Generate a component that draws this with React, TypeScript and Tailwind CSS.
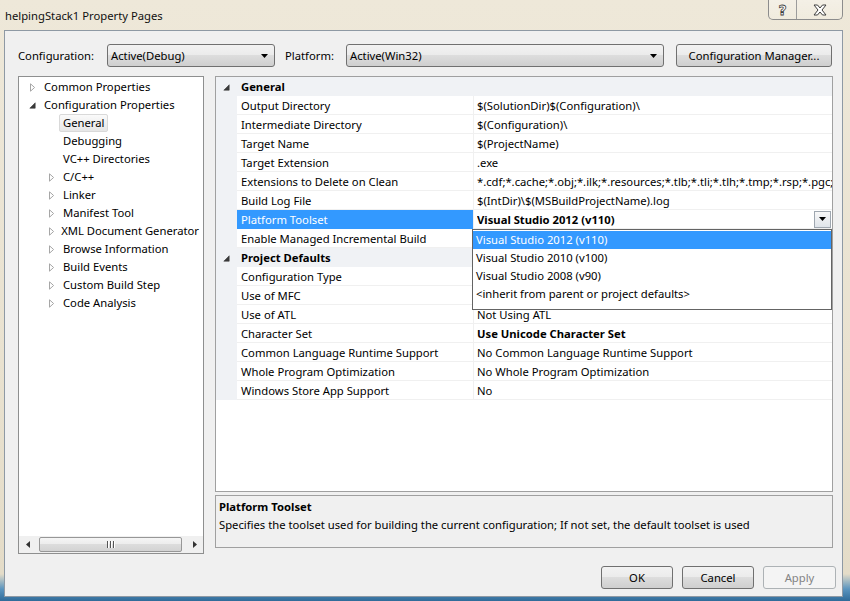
import React from "react";

const Collapsed = () => (
  <svg width="7" height="9" viewBox="0 0 7 9">
    <path d="M1.5 0.8 L5.6 4.5 L1.5 8.2 Z" fill="#ffffff" stroke="#a6a6a6" strokeWidth="1" />
  </svg>
);
const Expanded = () => (
  <svg width="7" height="7" viewBox="0 0 7 7">
    <path d="M6.2 0.8 L6.2 6.2 L0.8 6.2 Z" fill="#3a3a3a" stroke="#3a3a3a" strokeWidth="0.6" />
  </svg>
);
const DownArrow = ({ w = 7 }: { w?: number }) => (
  <svg width={w} height="4" viewBox="0 0 7 4">
    <path d="M0 0 L7 0 L3.5 4 Z" fill="#000" />
  </svg>
);

type TI = { level: 0 | 1; label: string; exp?: "c" | "e"; sel?: boolean };
const tree: TI[] = [
  { level: 0, label: "Common Properties", exp: "c" },
  { level: 0, label: "Configuration Properties", exp: "e" },
  { level: 1, label: "General", sel: true },
  { level: 1, label: "Debugging" },
  { level: 1, label: "VC++ Directories" },
  { level: 1, label: "C/C++", exp: "c" },
  { level: 1, label: "Linker", exp: "c" },
  { level: 1, label: "Manifest Tool", exp: "c" },
  { level: 1, label: "XML Document Generator", exp: "c" },
  { level: 1, label: "Browse Information", exp: "c" },
  { level: 1, label: "Build Events", exp: "c" },
  { level: 1, label: "Custom Build Step", exp: "c" },
  { level: 1, label: "Code Analysis", exp: "c" },
];

type Row =
  | { cat: string }
  | { name: string; value: string; bold?: boolean; sel?: boolean; drop?: boolean };
const rows: Row[] = [
  { cat: "General" },
  { name: "Output Directory", value: "$(SolutionDir)$(Configuration)\\" },
  { name: "Intermediate Directory", value: "$(Configuration)\\" },
  { name: "Target Name", value: "$(ProjectName)" },
  { name: "Target Extension", value: ".exe" },
  {
    name: "Extensions to Delete on Clean",
    value:
      "*.cdf;*.cache;*.obj;*.ilk;*.resources;*.tlb;*.tli;*.tlh;*.tmp;*.rsp;*.pgc;*.pgd;*.meta;*.tlog;*.manifest;*.res",
  },
  { name: "Build Log File", value: "$(IntDir)\\$(MSBuildProjectName).log" },
  { name: "Platform Toolset", value: "Visual Studio 2012 (v110)", bold: true, sel: true, drop: true },
  { name: "Enable Managed Incremental Build", value: "" },
  { cat: "Project Defaults" },
  { name: "Configuration Type", value: "" },
  { name: "Use of MFC", value: "" },
  { name: "Use of ATL", value: "Not Using ATL" },
  { name: "Character Set", value: "Use Unicode Character Set", bold: true },
  { name: "Common Language Runtime Support", value: "No Common Language Runtime Support" },
  { name: "Whole Program Optimization", value: "No Whole Program Optimization" },
  { name: "Windows Store App Support", value: "No" },
];

const options = [
  "Visual Studio 2012 (v110)",
  "Visual Studio 2010 (v100)",
  "Visual Studio 2008 (v90)",
  "<inherit from parent or project defaults>",
];

function Combo({ text, w }: { text: string; w: string }) {
  return (
    <div
      className={`${w} h-[23px] rounded-[3px] border border-[#707070] bg-[linear-gradient(to_bottom,#f2f2f2_0%,#ebebeb_50%,#dddddd_50%,#cfcfcf_100%)] flex items-center pl-[3px] pr-[6px]`}
    >
      <span className="flex-1 whitespace-nowrap">{text}</span>
      <DownArrow />
    </div>
  );
}

function Button({ text, w, disabled }: { text: string; w: string; disabled?: boolean }) {
  return (
    <div
      className={
        disabled
          ? `${w} h-[23px] rounded-[3px] border border-[#adb2b5] bg-[#f4f4f4] text-[#838383] flex items-center justify-center`
          : `${w} h-[23px] rounded-[3px] border border-[#707070] bg-[linear-gradient(to_bottom,#f2f2f2_0%,#ebebeb_50%,#dddddd_50%,#cfcfcf_100%)] flex items-center justify-center`
      }
    >
      {text}
    </div>
  );
}

export default function App() {
  return (
    <div className="w-[850px] h-[601px] overflow-hidden flex flex-col font-['Noto_Sans',sans-serif] text-[11.25px] leading-[18px] text-black bg-[linear-gradient(to_bottom,#eee8d9_0%,#e9e2d0_60%,#e4dcc8_95.5%,#5b95bf_98%,#2f6b99_100%)]">
      {/* Title bar */}
      <div className="h-[30px] shrink-0 flex items-start">
        <div className="pl-[5px] pt-[7px] text-[#101010]">helpingStack1 Property Pages</div>
        <div className="ml-auto mr-[7px] flex h-[20px] border border-t-0 border-[#8c8c8c] rounded-b-[5px] bg-[linear-gradient(to_bottom,rgba(255,255,255,0.35),rgba(255,255,255,0.15))]">
          <div className="w-[28px] flex items-center justify-center border-r border-[#9c9c9c]">
            <span className="text-[14px] font-bold leading-[14px] text-white [-webkit-text-stroke:0.8px_#3f3f3f] font-['DejaVu_Sans',sans-serif]">
              ?
            </span>
          </div>
          <div className="w-[45px] flex items-center justify-center">
            <svg width="14" height="12" viewBox="0 0 14 12">
              <path
                d="M1 1 H4.5 L7 4 L9.5 1 H13 L9 6 L13 11 H9.5 L7 8 L4.5 11 H1 L5 6 Z"
                fill="#ffffff"
                stroke="#3f3f3f"
                strokeWidth="1"
                strokeLinejoin="round"
              />
            </svg>
          </div>
        </div>
      </div>

      {/* Client area */}
      <div className="ml-[4px] mr-[7px] h-[567px] shrink-0 bg-[#f0f0f0] border border-[#8e99a4] flex flex-col pl-[13px] pr-[9px] pt-[13px]">
        {/* toolbar */}
        <div className="h-[23px] flex items-center">
          <span className="w-[89px]">Configuration:</span>
          <Combo text="Active(Debug)" w="w-[168px]" />
          <span className="ml-[10px] w-[61px]">Platform:</span>
          <Combo text="Active(Win32)" w="w-[318px]" />
          <div className="ml-[12px]">
            <Button text="Configuration Manager..." w="w-[156px]" />
          </div>
        </div>

        {/* content */}
        <div className="mt-[9px] flex gap-[11px]">
          {/* Tree */}
          <div className="w-[186px] h-[478px] border border-[#8e8f8f] bg-white flex flex-col">
            <div className="flex-1 pt-[1px]">
              {tree.map((t, i) => (
                <div
                  key={i}
                  className={`h-[18px] flex items-center whitespace-nowrap ${t.level === 0 ? "pl-[10px]" : "pl-[29px]"}`}
                >
                  <div className="w-[15px] h-[18px] flex items-center">
                    {t.exp === "c" ? <Collapsed /> : t.exp === "e" ? <Expanded /> : null}
                  </div>
                  <span
                    className={
                      t.sel
                        ? "-ml-[4px] px-[3px] h-[18px] leading-[16px] border border-[#d9d9d9] rounded-[2px] bg-[linear-gradient(to_bottom,#fafafa,#e6e6e6)]"
                        : "-ml-[4px] px-[3px] h-[18px] leading-[16px] border border-transparent"
                    }
                  >
                    {t.label}
                  </span>
                </div>
              ))}
            </div>
            {/* horizontal scrollbar */}
            <div className="h-[17px] flex items-center bg-[#f0f0f0]">
              <div className="w-[17px] h-full flex items-center justify-center">
                <svg width="4" height="7" viewBox="0 0 4 7">
                  <path d="M4 0 L4 7 L0 3.5 Z" fill="#333" />
                </svg>
              </div>
              <div className="ml-[3px] w-[143px] h-[15px] rounded-[2px] border border-[#979797] bg-[linear-gradient(to_bottom,#f5f5f5_0%,#ececec_50%,#dcdcdc_50%,#d3d3d3_100%)] flex items-center justify-center">
                <svg width="8" height="7" viewBox="0 0 8 7">
                  <rect x="0" y="0" width="2" height="7" fill="#555" />
                  <rect x="3" y="0" width="2" height="7" fill="#555" />
                  <rect x="6" y="0" width="2" height="7" fill="#555" />
                  <rect x="1" y="0" width="1" height="7" fill="#fff" />
                  <rect x="4" y="0" width="1" height="7" fill="#fff" />
                  <rect x="7" y="0" width="1" height="7" fill="#fff" />
                </svg>
              </div>
              <div className="ml-auto w-[17px] h-full flex items-center justify-center">
                <svg width="4" height="7" viewBox="0 0 4 7">
                  <path d="M0 0 L0 7 L4 3.5 Z" fill="#333" />
                </svg>
              </div>
            </div>
          </div>

          {/* Right column */}
          <div className="w-[618px] flex flex-col">
            <div className="relative h-[416px] border border-[#a0a0a0] bg-white">
              {rows.map((r, i) =>
                "cat" in r ? (
                  <div key={i} className="h-[19px] flex items-center bg-[#f0f2f5] whitespace-nowrap pt-[1px]">
                    <div className="w-[21px] h-full flex items-center pl-[7px]">
                      <Expanded />
                    </div>
                    <span className="pl-[4px] font-bold">{r.cat}</span>
                  </div>
                ) : (
                  <div key={i} className="h-[19px] flex bg-[#f0f2f5] whitespace-nowrap">
                    <div className="w-[21px] shrink-0" />
                    <div
                      className={
                        r.sel
                          ? "w-[236px] shrink-0 h-full flex items-center pl-[4px] pt-[1px] bg-[#3399ff] text-white"
                          : "w-[236px] shrink-0 h-full flex items-center pl-[4px] pt-[1px] bg-white border-b border-[#f0f0f0]"
                      }
                    >
                      {r.name}
                    </div>
                    <div className="w-[1px] bg-[#f0f0f0] shrink-0" />
                    <div className="flex-1 min-w-0 h-full flex items-center pl-[3px] bg-white border-b border-[#f0f0f0] overflow-hidden">
                      <span className={r.bold ? "font-bold flex-1 overflow-hidden pt-[1px]" : "flex-1 overflow-hidden pt-[1px]"}>
                        {r.value}
                      </span>
                      {r.drop && (
                        <div className="w-[17px] h-[17px] mr-[1px] shrink-0 border border-[#9fa7b0] bg-[linear-gradient(to_bottom,#f8f8f8,#dfe4ea)] flex items-center justify-center">
                          <DownArrow w={7} />
                        </div>
                      )}
                    </div>
                  </div>
                )
              )}

              {/* Dropdown list */}
              <div className="absolute left-[256px] top-[152px] w-[360px] h-[81px] bg-white border border-[#646464] pt-[1px]">
                {options.map((o, i) => (
                  <div
                    key={i}
                    className={
                      i === 0
                        ? "h-[18px] flex items-center pl-[3px] bg-[#3399ff] text-white whitespace-nowrap"
                        : "h-[18px] flex items-center pl-[3px] whitespace-nowrap"
                    }
                  >
                    {o}
                  </div>
                ))}
              </div>
            </div>

            {/* Description */}
            <div className="mt-[3px] h-[53px] border border-[#a0a0a0] bg-[#f0f0f0] pl-[3px] pt-[2px]">
              <div className="font-bold">Platform Toolset</div>
              <div>Specifies the toolset used for building the current configuration; If not set, the default toolset is used</div>
            </div>
          </div>
        </div>

        {/* Buttons */}
        <div className="mt-[12px] flex justify-end gap-[9px] -mr-[3px]">
          <Button text="OK" w="w-[72px]" />
          <Button text="Cancel" w="w-[72px]" />
          <Button text="Apply" w="w-[73px]" disabled />
        </div>
      </div>
    </div>
  );
}
